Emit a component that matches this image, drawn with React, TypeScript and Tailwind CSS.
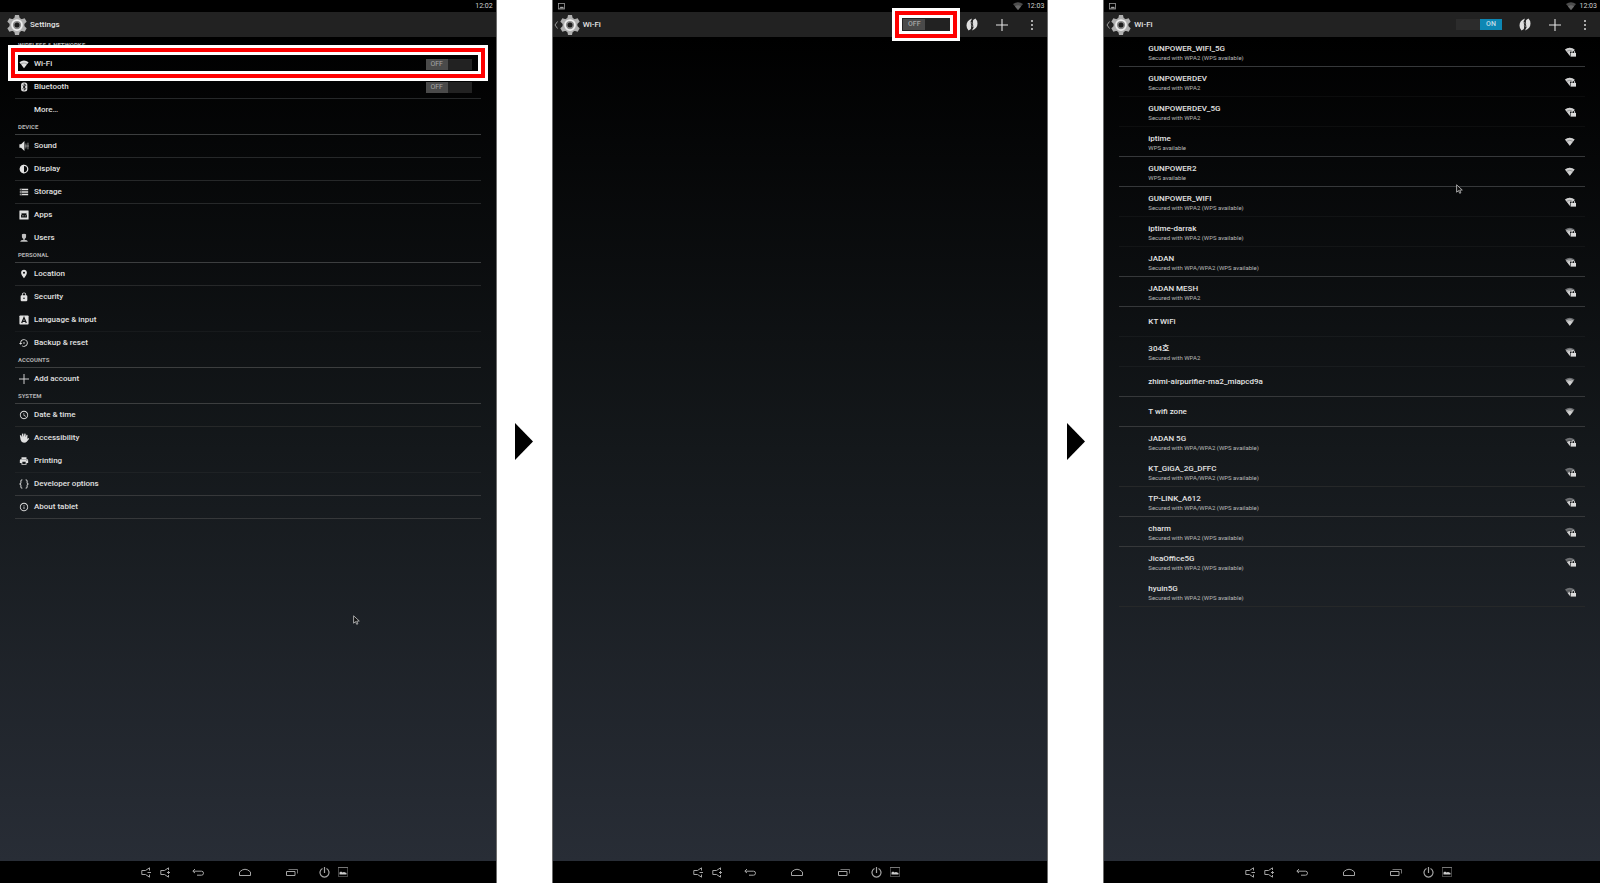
import React, { useState } from "react";
import {
  MdLocationOn,
  MdLock,
  MdSettingsBackupRestore,
  MdAccessTime,
  MdPrint,
  MdInfoOutline,
  MdStorage,
} from "react-icons/md";

type IconProps = { className?: string };

const WifiFan = ({ level = 3, locked = false, className = "" }: { level?: number; locked?: boolean; className?: string }) => {
  const scale = [0.45, 0.6, 0.8, 1][level];
  return (
    <svg viewBox="0 0 11 10" className={className} aria-hidden="true">
      <path d="M0 2.6Q4.8-1 9.6 2.6L4.8 8.8z" fill="#6b6d70" />
      <path
        d="M0 2.6Q4.8-1 9.6 2.6L4.8 8.8z"
        fill="#cfcfcf"
        transform={`translate(${4.8 - 4.8 * scale} ${8.8 - 8.8 * scale}) scale(${scale})`}
      />
      <path d="M1.800 4.300Q4.800 2.200 7.800 4.300" fill="none" stroke="#151719" strokeWidth=".5" opacity=".6" />
      {locked && (
        <g>
          <path d="M5 4.6h6V10H5z" fill="#151719" />
          <path d="M5.6 6h5.4v3.6H5.6z" fill="#dcdcdc" />
          <path d="M7 6V4.8a1.3 1.3 0 0 1 2.6 0V6" fill="none" stroke="#dcdcdc" strokeWidth="0.9" />
        </g>
      )}
    </svg>
  );
};

const WifiIcon = ({ className }: IconProps) => (
  <svg viewBox="0 0 24 24" className={className} fill="currentColor" aria-hidden="true">
    <path d="M1 8Q12-.5 23 8l-2.5 3.2Q12 5 3.500 11.200zM5 13q7-5 14 0L12 22z" />
    <path d="M3 9.500Q12 3 21 9.500L19 13H5z" opacity=".75" />
  </svg>
);
const BluetoothIcon = ({ className }: IconProps) => (
  <svg viewBox="0 0 24 24" className={className} aria-hidden="true">
    <rect x="5" y="1" width="15" height="22" rx="6" fill="currentColor" />
    <path d="M8.500 8l8 8-4 4V4l4 4-8 8" fill="none" stroke="#08090a" strokeWidth="2" />
  </svg>
);
const SoundIcon = ({ className }: IconProps) => (
  <svg viewBox="0 0 24 24" className={className} fill="currentColor" aria-hidden="true">
    <path d="M1 8h4l8-8v24l-8-8H1z" />
    <path d="M16.500 6v12M21.500 4v16" stroke="currentColor" strokeWidth="2" opacity=".7" />
    <path d="M14 12h10" stroke="currentColor" strokeWidth="2" opacity=".5" />
  </svg>
);
const DisplayIcon = ({ className }: IconProps) => (
  <svg viewBox="0 0 24 24" className={className} fill="currentColor" aria-hidden="true">
    <circle cx="12" cy="12" r="9" fill="none" stroke="currentColor" strokeWidth="3" />
    <path d="M12 2a10 10 0 0 0 0 20z" />
  </svg>
);
const AppsIcon = ({ className }: IconProps) => (
  <svg viewBox="0 0 24 24" className={className} aria-hidden="true">
    <rect x="1" y="1" width="22" height="22" rx="1" fill="currentColor" />
    <path d="M5 18v-4a7 6 0 0 1 14 0v4z" fill="#0c0e0f" />
    <path d="M6 7l3 3M18 7l-3 3" stroke="#0c0e0f" strokeWidth="2" />
    <path d="M8 14h3M14 14h2" stroke="currentColor" strokeWidth="2" />
  </svg>
);
const UsersIcon = ({ className }: IconProps) => (
  <svg viewBox="0 0 24 24" className={className} fill="currentColor" opacity=".85" aria-hidden="true">
    <path d="M7 3q5-3 10 0v6q0 4-3 5v2h-4v-2q-3-1-3-5z" />
    <path d="M3 21q0-5 9-5t9 5z" />
  </svg>
);
const LanguageIcon = ({ className }: IconProps) => (
  <svg viewBox="0 0 24 24" className={className} aria-hidden="true">
    <rect x="1" y="1" width="22" height="22" rx="2" fill="currentColor" />
    <path d="M6.500 19L12 6l5.500 13M8.500 15h7" fill="none" stroke="#101214" strokeWidth="3" />
  </svg>
);
const PlusIcon = ({ className }: IconProps) => (
  <svg viewBox="0 0 12 12" className={className} aria-hidden="true">
    <path d="M6 0v12M0 6h12" stroke="currentColor" strokeWidth="1.100" />
  </svg>
);
const HandIcon = ({ className }: IconProps) => (
  <svg viewBox="0 0 24 24" className={className} fill="currentColor" aria-hidden="true">
    <path d="M2 6l3-1 2.500 5L7 2l3-1 1.500 8L13 1l3 .5V10l2-6 2.500 1-.5 9 3-2 1.500 2-6 7q-2 2.500-6.500 2.500-6 0-8-7z" />
  </svg>
);
const BracesIcon = ({ className }: IconProps) => (
  <svg viewBox="0 0 24 24" className={className} fill="none" stroke="currentColor" strokeWidth="2.400" aria-hidden="true">
    <path d="M8 2H7Q4.500 2 4.500 5v4q0 3-3 3 3 0 3 3v4q0 3 2.500 3h1M16 2h1q2.500 0 2.500 3v4q0 3 3 3-3 0-3 3v4q0 3-2.500 3h-1" />
  </svg>
);

const GearIcon = () => (
  <svg viewBox="0 0 40 40" className="size-5 shrink-0" aria-hidden="true">
    <g fill="#b0b0b0">
      {[0, 60, 120].map((a) => (
        <path key={a} d="M16 0h8l1.500 7v26L24 40h-8l-1.500-7V7z" transform={`rotate(${a} 20 20)`} />
      ))}
      <circle cx="20" cy="20" r="15" />
    </g>
    <circle cx="20" cy="20" r="10" fill="#8b8b8b" stroke="#ededed" strokeWidth="3.500" />
    <circle cx="20" cy="20" r="5" fill="#1c1c1c" />
  </svg>
);

const ChevronIcon = () => (
  <svg viewBox="0 0 4 8" className="h-2 w-1" fill="none" stroke="#999" aria-hidden="true">
    <path d="M3.500.5L1 4l2.500 3.500" />
  </svg>
);

const WpsIcon = () => (
  <svg viewBox="0 0 24 26" className="h-[13px] w-3" aria-hidden="true">
    <g fill="#dedede">
      <path d="M12 1Q1 5 1 15q0 6 4 10l5-3 1.500-9-3.500 3q-1-7 4-15z" />
      <path d="M12 25Q23 21 23 11q0-6-4-10l-5 3-1.500 9 3.500-3q1 7-4 15z" />
    </g>
    <path d="M8.500 16L10 8M15.500 10L14 18" stroke="#dedede" strokeWidth="2" />
    <path d="M13.500 3l-3 20" stroke="#222" strokeWidth="1.600" />
  </svg>
);

const PictureIcon = ({ className }: IconProps) => (
  <svg viewBox="0 0 10 10" className={className} aria-hidden="true">
    <rect x=".5" y=".5" width="9" height="9" fill="none" stroke="#444" />
    <path d="M0 .5h10" stroke="#777" />
    <path d="M1.500 7.500V5.500L3 4.500l1.500 1L6 5l2.500 1v1.500z" fill="#ccc" />
  </svg>
);

const StatusPicture = () => (
  <svg viewBox="0 0 7 7" className="size-[7px]" aria-hidden="true">
    <rect x=".5" y=".5" width="6" height="5.500" fill="none" stroke="#999" strokeWidth=".8" />
    <path d="M1 5.500L3 3.500l1 .8 1-.8 1 2z" fill="#aaa" />
  </svg>
);

const PointerArrow = ({ className }: IconProps) => (
  <svg viewBox="0 0 7 10" className={`pointer-events-none absolute h-[10px] w-[7px] ${className}`} aria-hidden="true">
    <path d="M.6.8v7.400l1.900-1.600 1.200 2.700 1.200-.5-1.200-2.600 2.600-.2z" fill="#111" stroke="#c8c8c8" strokeWidth=".8" />
  </svg>
);

const Highlight = ({ className }: IconProps) => (
  <span className={`pointer-events-none absolute border-3 border-white ${className}`}>
    <span className="block h-full border-4 border-[#fe0000]">
      <span className="block h-full border-3 border-white" />
    </span>
  </span>
);

function Toggle({ label, initial = false }: { label: string; initial?: boolean }) {
  const [on, setOn] = useState(initial);
  return (
    <button
      type="button"
      role="switch"
      aria-checked={on}
      aria-label={label}
      onClick={() => setOn(!on)}
      className={`flex h-[11px] w-[46px] shrink-0 ${on ? "justify-end bg-[#2c2c2c]" : "justify-start bg-[#222]"}`}
    >
      <span
        className={`flex h-full w-[22px] items-center justify-center text-[7px] leading-none ${
          on ? "bg-[#0d87b4] text-[#c4dde8]" : "bg-[#4a4a4a] text-[#a5a5a5]"
        }`}
      >
        {on ? "ON" : "OFF"}
      </span>
    </button>
  );
}

function StatusBar({ time, connected }: { time: string; connected: boolean }) {
  return (
    <div className="flex h-3 items-center justify-between bg-black pr-[3px] pl-[5px] text-[7px] leading-none text-[#d0d0d0]">
      <span>{connected && <StatusPicture />}</span>
      <span className="flex items-center gap-1">
        {connected && (
          <svg viewBox="0 0 10 8" className="h-2 w-[10px]" aria-hidden="true">
            <path d="M0 2Q5-1.500 10 2L5 8z" fill="#4c4c4c" />
            <path d="M2 4.400Q5 2.200 8 4.400L5 8z" fill="#686868" />
          </svg>
        )}
        {time}
      </span>
    </div>
  );
}

function ActionBar({ title, back = false, children }: { title: string; back?: boolean; children?: React.ReactNode }) {
  return (
    <header className="flex h-[25px] items-center bg-[#222] pr-[13px] text-[8px] font-medium text-[#e4e4e4]">
      <button type="button" className="flex items-center" aria-label={back ? "Back" : "Home"}>
        <span className="flex w-[7px] justify-center">{back && <ChevronIcon />}</span>
        <GearIcon />
      </button>
      <h1 className="ml-[3px] flex-1">{title}</h1>
      {children}
    </header>
  );
}

function WifiActions({ on, highlighted = false }: { on: boolean; highlighted?: boolean }) {
  return (
    <div className="flex items-center">
      <div className="relative mr-[17px] flex">
        <Toggle label="Wi-Fi" initial={on} />
        {highlighted && <Highlight className="-inset-[11px]" />}
      </div>
      <button type="button" aria-label="WPS" className="mr-[18px]">
        <WpsIcon />
      </button>
      <button type="button" aria-label="Add network" className="mr-[22px]">
        <PlusIcon className="size-3" />
      </button>
      <button type="button" aria-label="More options" className="flex w-1 flex-col items-center gap-[2px]">
        <i className="size-[2px] bg-[#aaa]" />
        <i className="size-[2px] bg-[#aaa]" />
        <i className="size-[2px] bg-[#aaa]" />
      </button>
    </div>
  );
}

function NavBar() {
  return (
    <nav className="flex h-[22px] items-center justify-center bg-black pr-[7px] text-[#a4a4a4]" aria-label="System">
      <button type="button" aria-label="Volume down" className="mr-2">
        <svg viewBox="0 0 11 11" className="size-[11px]" fill="none" stroke="currentColor">
          <path d="M8.500 3.500V.8L4.500 3.500H.8v4h3.700L8.500 10.200V7.500M6.500 5.500H10" />
        </svg>
      </button>
      <button type="button" aria-label="Volume up" className="mr-[21px]">
        <svg viewBox="0 0 11 11" className="size-[11px]" fill="none" stroke="currentColor">
          <path d="M8.500 3V.8L4.500 3.500H.8v4h3.700L8.500 10.200V8M7 5.500h3M8.500 4v3" />
        </svg>
      </button>
      <button type="button" aria-label="Back" className="mr-[35px]">
        <svg viewBox="0 0 12 10" className="h-[10px] w-3" fill="none" stroke="currentColor">
          <path d="M3 2L.8 4.200 3 6M1 4.200h8.500q2 0 2 2t-2 2H5" />
        </svg>
      </button>
      <button type="button" aria-label="Home" className="mr-[35px]">
        <svg viewBox="0 0 12 10" className="h-[10px] w-3" fill="none" stroke="currentColor">
          <path d="M.5 8.500V5Q6-.5 11.500 5v3.500z" />
        </svg>
      </button>
      <button type="button" aria-label="Recent apps" className="mr-[21px]">
        <svg viewBox="0 0 12 10" className="h-[10px] w-3" fill="none" stroke="currentColor">
          <path d="M.5 4.500h8.500v4H.5z" />
          <path d="M2.500 2.500h9v4" opacity=".7" />
        </svg>
      </button>
      <button type="button" aria-label="Power" className="mr-2">
        <svg viewBox="0 0 11 11" className="size-[11px]" fill="none" stroke="currentColor">
          <path d="M3.500 1.500a4.500 4.500 0 1 0 4 0M5.500 0v6" strokeWidth="1.200" />
        </svg>
      </button>
      <button type="button" aria-label="Screenshot">
        <PictureIcon className="size-[10px]" />
      </button>
    </nav>
  );
}

function Panel({ time, connected = false, edge, bar, children }: {
  time: string;
  connected?: boolean;
  edge: string;
  bar: React.ReactNode;
  children?: React.ReactNode;
}) {
  return (
    <section className={`relative flex min-w-0 flex-col border-[#6d6d6d] bg-black ${edge}`}>
      <StatusBar time={time} connected={connected} />
      {bar}
      <div className="flex-1 bg-linear-to-b/srgb from-black via-[#14181b] to-[#282d36]">{children}</div>
      <NavBar />
    </section>
  );
}

const Divider = {
  strong: "border-[#36383a]",
  soft: "border-[#262829]",
  faint: "border-[#ffffff0a]",
  none: "border-transparent",
};
type Line = keyof typeof Divider;

type Item = { label: string; icon?: React.ComponentType<IconProps>; line: Line; toggle?: boolean; highlighted?: boolean };
const groups: { title: string; items: Item[] }[] = [
  {
    title: "WIRELESS & NETWORKS",
    items: [
      { label: "Wi-Fi", icon: WifiIcon, line: "none", toggle: true, highlighted: true },
      { label: "Bluetooth", icon: BluetoothIcon, line: "soft", toggle: true },
      { label: "More…", line: "none" },
    ],
  },
  {
    title: "DEVICE",
    items: [
      { label: "Sound", icon: SoundIcon, line: "soft" },
      { label: "Display", icon: DisplayIcon, line: "soft" },
      { label: "Storage", icon: MdStorage, line: "soft" },
      { label: "Apps", icon: AppsIcon, line: "none" },
      { label: "Users", icon: UsersIcon, line: "none" },
    ],
  },
  {
    title: "PERSONAL",
    items: [
      { label: "Location", icon: MdLocationOn, line: "soft" },
      { label: "Security", icon: MdLock, line: "none" },
      { label: "Language & input", icon: LanguageIcon, line: "faint" },
      { label: "Backup & reset", icon: MdSettingsBackupRestore, line: "none" },
    ],
  },
  { title: "ACCOUNTS", items: [{ label: "Add account", icon: PlusIcon, line: "none" }] },
  {
    title: "SYSTEM",
    items: [
      { label: "Date & time", icon: MdAccessTime, line: "soft" },
      { label: "Accessibility", icon: HandIcon, line: "none" },
      { label: "Printing", icon: MdPrint, line: "faint" },
      { label: "Developer options", icon: BracesIcon, line: "strong" },
      { label: "About tablet", icon: MdInfoOutline, line: "strong" },
    ],
  },
];

function SettingsList() {
  return (
    <div className="px-[15px] pt-[3px]">
      {groups.map((g) => (
        <section key={g.title}>
          <h2 className="flex h-[13px] items-center border-b border-[#3c3e3f] pb-[2px] pl-[3px] text-[6px] leading-none font-bold text-[#b0b0b0]">
            {g.title}
          </h2>
          <ul>
            {g.items.map(({ label, icon: Icon, line, toggle, highlighted }) => (
              <li key={label} className={`relative flex h-[23px] items-center border-b pr-[9px] ${Divider[line]}`}>
                <button type="button" className="flex h-full flex-1 items-center text-[8px] font-medium text-[#e0e0e0]">
                  <span className="mr-[5px] ml-1 flex w-[10px] justify-center">
                    {Icon && <Icon className="size-[10px]" />}
                  </span>
                  {label}
                </button>
                {toggle && <Toggle label={label} />}
                {highlighted && <Highlight className="-inset-x-[7px] -top-2 -bottom-[6px] z-10" />}
              </li>
            ))}
          </ul>
        </section>
      ))}
    </div>
  );
}

const WPA2 = "Secured with WPA2";
const WPA2_WPS = "Secured with WPA2 (WPS available)";
const WPA_WPS = "Secured with WPA/WPA2 (WPS available)";
const WPS = "WPS available";

const networks: { name: string; note?: string; level: number; line: Line }[] = [
  { name: "GUNPOWER_WIFI_5G", note: WPA2_WPS, level: 3, line: "strong" },
  { name: "GUNPOWERDEV", note: WPA2, level: 3, line: "faint" },
  { name: "GUNPOWERDEV_5G", note: WPA2, level: 3, line: "faint" },
  { name: "iptime", note: WPS, level: 3, line: "strong" },
  { name: "GUNPOWER2", note: WPS, level: 3, line: "strong" },
  { name: "GUNPOWER_WIFI", note: WPA2_WPS, level: 3, line: "faint" },
  { name: "iptime-darrak", note: WPA2_WPS, level: 2, line: "faint" },
  { name: "JADAN", note: WPA_WPS, level: 2, line: "strong" },
  { name: "JADAN MESH", note: WPA2, level: 2, line: "strong" },
  { name: "KT WiFi", level: 2, line: "faint" },
  { name: "304호", note: WPA2, level: 2, line: "faint" },
  { name: "zhimi-airpurifier-ma2_miapcd9a", level: 2, line: "strong" },
  { name: "T wifi zone", level: 2, line: "strong" },
  { name: "JADAN 5G", note: WPA_WPS, level: 1, line: "none" },
  { name: "KT_GiGA_2G_DFFC", note: WPA_WPS, level: 0, line: "soft" },
  { name: "TP-LINK_A612", note: WPA_WPS, level: 1, line: "strong" },
  { name: "charm", note: WPA2_WPS, level: 1, line: "strong" },
  { name: "JicaOffice5G", note: WPA2_WPS, level: 1, line: "none" },
  { name: "hyuin5G", note: WPA2_WPS, level: 0, line: "soft" },
];

function NetworkList() {
  return (
    <ul className="px-[15px]">
      {networks.map((n) => (
        <li key={n.name} className={`h-[30px] border-b ${Divider[n.line]}`}>
          <button type="button" className="flex h-full w-full items-center pr-[9px] pl-[29px] text-left">
            <span className={`flex flex-1 flex-col ${n.note ? "pt-[2px]" : ""}`}>
              <span className="text-[8px] leading-[9px] font-medium text-[#e4e4e4]">{n.name}</span>
              {n.note && <span className="text-[6px] leading-[9px] text-[#b8b8b8]">{n.note}</span>}
            </span>
            <WifiFan
              level={n.level}
              locked={!!n.note && n.note !== WPS}
              className="h-[10px] w-[11px]"
            />
          </button>
        </li>
      ))}
    </ul>
  );
}

const StepArrow = () => (
  <div className="flex items-center justify-center">
    <svg viewBox="0 0 18 37" className="h-[37px] w-[18px]" aria-hidden="true">
      <path d="M0 0l18 18.500L0 37z" />
    </svg>
  </div>
);

export default function App() {
  return (
    <main className="grid min-h-screen grid-cols-[1fr_55px_1fr_55px_1fr] bg-white font-['Roboto','Noto_Sans_CJK_KR',sans-serif]">
      <Panel time="12:02" edge="border-r" bar={<ActionBar title="Settings" />}>
        <SettingsList />
        <PointerArrow className="top-[615px] left-[353px]" />
      </Panel>
      <StepArrow />
      <Panel
        time="12:03"
        connected
        edge="border-x"
        bar={
          <ActionBar title="Wi-Fi" back>
            <WifiActions on={false} highlighted />
          </ActionBar>
        }
      />
      <StepArrow />
      <Panel
        time="12:03"
        connected
        edge="border-l"
        bar={
          <ActionBar title="Wi-Fi" back>
            <WifiActions on />
          </ActionBar>
        }
      >
        <NetworkList />
        <PointerArrow className="top-[184px] left-[352px]" />
      </Panel>
    </main>
  );
}
